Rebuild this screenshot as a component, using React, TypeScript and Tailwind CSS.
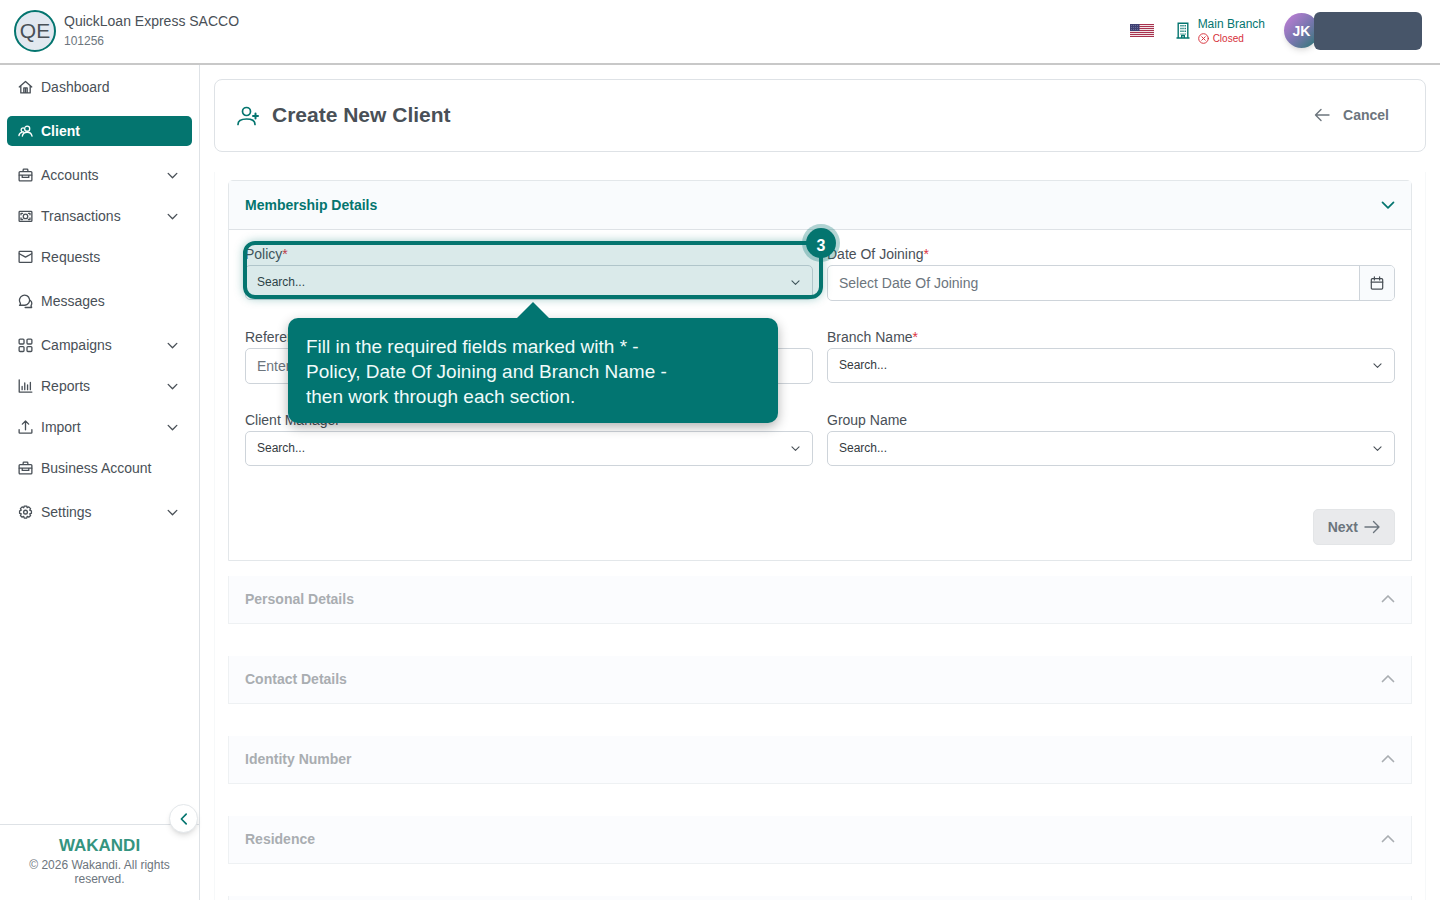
import type { ReactNode } from 'react';

type IconProps = { children: ReactNode; className?: string; viewBox?: string };

function Icon({ children, className = 'size-4', viewBox = '0 0 16 16' }: IconProps) {
  return (
    <svg
      className={`${className} shrink-0`}
      viewBox={viewBox}
      fill="none"
      stroke="currentColor"
      strokeWidth="1.4"
      strokeLinecap="round"
      strokeLinejoin="round"
      aria-hidden="true"
    >
      {children}
    </svg>
  );
}

const icons = {
  home: (
    <path d="M1.3 7.4 8 1.5l6.7 5.9M3 6.4v7.4h10V6.400M6.200 13.600V8.400h3.600v5.200M8 8.600v5" />
  ),
  client: (
    <>
      <circle cx="9.8" cy="5" r="2.700" />
      <path d="M4.600 13c.5-2.800 2.500-4.200 5.200-4.200s4.600 1.400 5.200 4.200M5.800 8.400A2.100 2.100 0 1 1 6 4.300M1 12.400c.2-1.900 1.400-3.200 3.600-3.700" />
    </>
  ),
  briefcase: (
    <>
      <rect x="1.200" y="3.800" width="13.600" height="10" rx="1" />
      <path d="M5.500 3.600V2c0-.5.3-.8.800-.8h3.400c.5 0 .8.3.8.800v1.600M1.400 7.600h13.200M4.500 7.600V10h7V7.600" />
    </>
  ),
  cash: (
    <>
      <rect x="1.200" y="2.600" width="13.600" height="10.600" rx=".8" />
      <circle cx="8" cy="7.900" r="2.400" />
      <path d="M3.200 6.200V4.600h1.700M12.800 6.200V4.600h-1.700M3.200 9.600v1.600h1.700M12.800 9.600v1.600h-1.700" />
    </>
  ),
  mail: (
    <>
      <rect x="1.200" y="1.400" width="13.600" height="11.800" rx=".8" />
      <path d="M1.400 4 8 7.600 14.600 4" />
    </>
  ),
  chat: (
    <>
      <path d="M2.200 11.400c.5-.6.5-1.200.2-1.900a5.400 5.400 0 1 1 4.900 2.500H1.600c0-.2.3-.3.6-.6Z" />
      <path d="M7.600 14.400h6.900v-.5c-.6-.5-.7-1.200-.3-2 .8-1.600.5-3.600-1-4.900" />
    </>
  ),
  grid: (
    <>
      <rect x="1.200" y="1.200" width="5.200" height="5.200" rx="1" />
      <rect x="9.600" y="1.200" width="5.200" height="5.200" rx="1" />
      <rect x="1.200" y="9.200" width="5.200" height="5.200" rx="1" />
      <rect x="9.600" y="9.200" width="5.200" height="5.200" rx="1" />
    </>
  ),
  chart: <path d="M1.300.9v13h13.500M4.400 11.400V7.900M7.200 11.400V4.200M10.200 11.400v-5M13.200 11.400V3.600" />,
  upload: <path d="M8 10.400V1.200M4.600 4.400 8 1.100l3.400 3.300M1.200 10.200v3c0 .4.3.7.7.7h12.200c.4 0 .7-.3.7-.7v-3" />,
  gear: (
    <>
      <circle cx="8" cy="7.600" r="2" />
      <path d="M6.700 1.100h2.600l.5 1.800 1.700-.9 1.900 1.900-.9 1.700 1.800.6v2.700l-1.800.5.9 1.800-1.900 1.800-1.700-.9-.5 1.900H6.700l-.6-1.900-1.700.9-1.800-1.800.9-1.800-1.800-.5V6.200l1.800-.6-.9-1.700L4.400 2l1.700.9Z" />
    </>
  ),
};

type NavEntry = { label: string; icon: keyof typeof icons; group?: boolean; active?: boolean };

const navEntries: NavEntry[] = [
  { label: 'Dashboard', icon: 'home' },
  { label: 'Client', icon: 'client', active: true },
  { label: 'Accounts', icon: 'briefcase', group: true },
  { label: 'Transactions', icon: 'cash', group: true },
  { label: 'Requests', icon: 'mail' },
  { label: 'Messages', icon: 'chat' },
  { label: 'Campaigns', icon: 'grid', group: true },
  { label: 'Reports', icon: 'chart', group: true },
  { label: 'Import', icon: 'upload', group: true },
  { label: 'Business Account', icon: 'briefcase' },
  { label: 'Settings', icon: 'gear', group: true },
];

const collapsedSections = ['Personal Details', 'Contact Details', 'Identity Number', 'Residence'];

function Chevron({ className, up = false }: { className: string; up?: boolean }) {
  return (
    <svg
      className={`${className} shrink-0`}
      viewBox="0 0 14 14"
      fill="none"
      stroke="currentColor"
      strokeWidth="1.7"
      strokeLinecap="round"
      strokeLinejoin="round"
      aria-hidden="true"
    >
      <path d={up ? 'M1.500 9.500 7 4l5.500 5.500' : 'M1.500 4.300 7 9.800l5.500-5.500'} />
    </svg>
  );
}

function UsFlag() {
  return (
    <svg className="h-[13px] w-6" viewBox="0 0 24 13" role="img" aria-label="English (US)">
      <rect width="24" height="13" fill="#f1e3e6" />
      <path
        d="M0 .5h24M0 2.500h24M0 4.500h24M0 6.500h24M0 8.500h24M0 10.500h24M0 12.500h24"
        stroke="#a8324e"
      />
      <rect width="9.500" height="7" fill="#3f4173" />
      <path d="M1 1.500h8M1 3.500h8M1 5.500h8" stroke="#8586ad" strokeWidth=".8" strokeDasharray=".8 1.200" />
    </svg>
  );
}

function Header() {
  return (
    <header className="flex h-[65px] shrink-0 items-center justify-between border-b-2 border-[#c8c8c8] bg-white pr-[18px] pb-0.5 pl-3.5">
      <div className="flex items-center gap-2">
        <div className="flex size-[42px] items-center justify-center rounded-full border-2 border-[#04756f] bg-[#e2e8f0] text-[21px] text-[#495057]">
          QE
        </div>
        <div>
          <p className="text-sm leading-5">QuickLoan Express SACCO</p>
          <p className="text-xs leading-5 text-[#6c757d]">101256</p>
        </div>
      </div>

      <div className="flex items-center">
        <button type="button" className="mr-[22px]">
          <UsFlag />
        </button>
        <div className="mr-[19px] flex items-center gap-2">
          <svg className="h-[17px] w-3.5 text-[#04756f]" viewBox="0 0 14 17" fill="none" stroke="currentColor" aria-hidden="true">
            <path d="M2.200 16V1.200h9.600V16M.5 16h13M5.700 16v-2.500h2.600V16" strokeWidth="1.400" />
            <path d="M5 3v9.500M7 3v9.500M9.200 3v9.500" strokeWidth="1.300" strokeDasharray="1.500 1.300" />
          </svg>
          <div>
            <p className="text-xs leading-4 text-[#04756f]">Main Branch</p>
            <p className="flex items-center gap-1 text-[10px] leading-3.5 text-[#d6303a]">
              <Icon className="size-[11px]">
                <circle cx="8" cy="8" r="7" />
                <path d="m5.500 5.500 5 5M10.500 5.500l-5 5" />
              </Icon>
              Closed
            </p>
          </div>
        </div>
        <div className="flex items-center">
          <div className="flex size-[35px] items-center justify-center rounded-full bg-linear-to-br from-[#c77ddb] via-[#7a76b0] to-[#04756f] text-sm font-bold text-white shadow-md">
            JK
          </div>
          <div className="relative -ml-[5px] h-[38px] w-[108px] rounded-md bg-[#475569]" />
        </div>
      </div>
    </header>
  );
}

function NavItem({ entry }: { entry: NavEntry }) {
  const content = (
    <>
      <Icon className="size-[15px]">{icons[entry.icon]}</Icon>
      <span>{entry.label}</span>
    </>
  );

  if (entry.group) {
    return (
      <li className="mb-[11px]">
        <button type="button" className="flex h-[30px] w-full items-center gap-2 pr-3.5 pl-[11px]">
          {content}
          <Chevron className="ml-auto size-[11px]" />
        </button>
      </li>
    );
  }

  return (
    <li className="mb-3.5">
      <a
        href="#"
        aria-current={entry.active ? 'page' : undefined}
        className={`flex h-[30px] items-center gap-2 rounded-[5px] px-[11px] ${
          entry.active ? 'bg-[#04756f] font-bold text-white' : ''
        }`}
      >
        {content}
      </a>
    </li>
  );
}

function Sidebar() {
  return (
    <aside className="relative flex w-[200px] shrink-0 flex-col border-r border-[#dee2e6] bg-white">
      <nav className="grow px-[7px] pt-[7px] text-sm">
        <ul>
          {navEntries.map((entry) => (
            <NavItem key={entry.label} entry={entry} />
          ))}
        </ul>
      </nav>

      <button
        type="button"
        aria-label="Collapse menu"
        className="absolute right-px bottom-[67px] flex size-[29px] items-center justify-center rounded-full border border-[#e3e7ea] bg-white text-[#04756f] shadow-md"
      >
        <Icon className="size-3.5">
          <path d="M10.500 2.500 5 8l5.500 5.500" strokeWidth="1.900" />
        </Icon>
      </button>

      <footer className="border-t border-[#dee2e6] px-4 pt-3 pb-3.5 text-center text-xs leading-3.5 text-[#6c757d]">
        <p className="mb-1 text-[17px] leading-[17px] font-bold text-[#359480]">WAKANDI</p>
        <p>© 2026 Wakandi. All rights reserved.</p>
      </footer>
    </aside>
  );
}

type FieldProps = { id: string; label: string; required?: boolean; children: ReactNode };

function Field({ id, label, required, children }: FieldProps) {
  return (
    <div className="relative">
      <label htmlFor={id} className="block h-[21px] text-sm leading-5">
        {label}
        {required && <span className="text-[#dc3545]">*</span>}
      </label>
      {children}
    </div>
  );
}

function SearchSelect({ id }: { id: string }) {
  return (
    <div className="grid items-center">
      <select
        id={id}
        className="col-start-1 row-start-1 h-[35px] w-full appearance-none rounded-[5px] border border-[#ced4da] bg-white px-[11px] pb-0.5 text-xs text-[#343a40]"
      >
        <option>Search...</option>
      </select>
      <Chevron className="pointer-events-none col-start-1 row-start-1 mr-[13px] size-[9px] justify-self-end" />
    </div>
  );
}

// Step marker, highlight frame and hint bubble of the guided tour
function TourStep() {
  return (
    <div className="pointer-events-none absolute -top-[3px] -right-2.5 -left-0.5 z-10 h-[58px] rounded-xl border-4 border-[#04756f] bg-[#04756f]/15 shadow-[0_0_10px_rgba(4,117,111,0.35)]">
      <span className="absolute -top-[17px] -right-[17px] flex size-[30px] items-center justify-center rounded-full bg-[#04756f] pt-1.5 text-base font-bold text-white ring-4 ring-[#04756f]/30">
        3
      </span>
      <div
        role="tooltip"
        className="absolute top-[73px] left-[41px] w-[490px] rounded-[10px] bg-[#027571] px-[18px] pt-4 pb-3.5 text-[19px] leading-[25px] text-[#f0fbfa] shadow-[0_4px_12px_rgba(0,0,0,0.3)]"
      >
        <svg className="absolute -top-4 left-[229px] h-4 w-8" viewBox="0 0 32 16" aria-hidden="true">
          <path d="M0 16 16 0l16 16Z" fill="#027571" />
        </svg>
        Fill in the required fields marked with * -
        <br />
        Policy, Date Of Joining and Branch Name -
        <br />
        then work through each section.
      </div>
    </div>
  );
}

function MembershipDetails() {
  return (
    <section className="rounded-t-[5px] border border-[#e3e7ea]">
      <h2>
        <button
          type="button"
          aria-expanded="true"
          className="flex h-[49px] w-full items-center justify-between border-b border-[#dee2e6] bg-[#f9fbfd] px-4 text-sm font-bold text-[#04756f]"
        >
          Membership Details
          <Chevron className="size-3.5" />
        </button>
      </h2>
      <form className="px-4 pt-3.5 pb-[15px]">
        <div className="grid grid-cols-2 gap-x-3.5 gap-y-[26px]">
          <Field id="policy" label="Policy" required>
            <SearchSelect id="policy" />
            <TourStep />
          </Field>
          <Field id="joining" label="Date Of Joining" required>
            <div className="flex h-9 overflow-hidden rounded-[5px] border border-[#ced4da]">
              <input
                id="joining"
                placeholder="Select Date Of Joining"
                className="min-w-0 grow px-[11px] text-sm placeholder:text-[#6c757d]"
              />
              <button
                type="button"
                aria-label="Open calendar"
                className="flex w-[35px] items-center justify-center border-l border-[#ced4da] bg-[#f9fbfd]"
              >
                <Icon className="size-3.5">
                  <rect x="1.500" y="3" width="13" height="12" rx="1.200" />
                  <path d="M1.500 7h13M5 1v3.500M11 1v3.500" />
                </Icon>
              </button>
            </div>
          </Field>
          <Field id="reference" label="Reference Number">
            <input
              id="reference"
              placeholder="Enter Reference Number"
              className="h-9 w-full rounded-[5px] border border-[#ced4da] px-[11px] text-sm placeholder:text-[#6c757d]"
            />
          </Field>
          <Field id="branch" label="Branch Name" required>
            <SearchSelect id="branch" />
          </Field>
          <Field id="manager" label="Client Manager">
            <SearchSelect id="manager" />
          </Field>
          <Field id="group" label="Group Name">
            <SearchSelect id="group" />
          </Field>
        </div>
        <div className="mt-[43px] flex justify-end">
          <button
            type="button"
            disabled
            className="flex h-9 items-center gap-1.5 rounded-[5px] border border-[#e3e5e7] bg-[#e9eaec] px-3.5 text-sm font-bold text-[#6c757d]"
          >
            Next
            <Icon className="size-4">
              <path d="M1 8h14M9.500 2.500 15 8l-5.500 5.500" />
            </Icon>
          </button>
        </div>
      </form>
    </section>
  );
}

export default function App() {
  return (
    <div className="flex h-screen flex-col overflow-hidden bg-white font-['Liberation_Sans',Arial,sans-serif] text-[#495057]">
      <Header />
      <div className="flex min-h-0 grow">
        <Sidebar />
        <main className="min-w-0 grow overflow-y-auto px-3.5 pt-3.5 [scrollbar-width:none]">
          <div className="flex h-[73px] items-center justify-between rounded-lg border border-[#dee2e6] pr-9 pb-0.5 pl-[22px]">
            <h1 className="flex items-center gap-[13px] text-[21px] font-bold">
              <Icon className="size-[22px] text-[#04756f]" viewBox="0 0 22 22">
                <circle cx="9.500" cy="7.500" r="4" strokeWidth="1.700" />
                <path d="M1 20.500c0-4 2.800-5.500 8.500-5.500s8.500 1.500 8.500 5.500" strokeWidth="1.700" />
                <path d="M18.500 9.500v5M16 12h5" strokeWidth="2" />
              </Icon>
              Create New Client
            </h1>
            <button type="button" className="flex items-center gap-[13px] text-sm font-bold text-[#6c757d]">
              <Icon className="size-4">
                <path d="M15 8H1.500M7 2.500 1.500 8 7 13.500" />
              </Icon>
              Cancel
            </button>
          </div>

          <div className="mt-5 border-x border-[#f6f8f9] px-[13px] pt-2">
            <MembershipDetails />
            <div className="mt-[15px] flex flex-col gap-8">
              {collapsedSections.map((title) => (
                <section key={title} className="border-x border-b border-[#eef1f3]">
                  <h2>
                    <button
                      type="button"
                      disabled
                      aria-expanded="false"
                      className="flex h-[47px] w-full items-center justify-between bg-[#fbfcfe] px-4 pb-0.5 text-sm font-bold text-[#a9adb1]"
                    >
                      {title}
                      <Chevron className="size-3.5" up />
                    </button>
                  </h2>
                </section>
              ))}
              <div className="h-12 border-x border-b border-[#eef1f3] bg-[#fbfcfe]" />
            </div>
          </div>
        </main>
      </div>
    </div>
  );
}
